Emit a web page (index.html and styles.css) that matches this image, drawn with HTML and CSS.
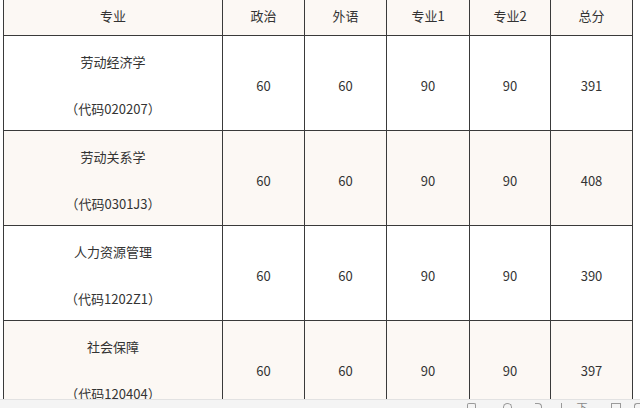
FILE: index.html
```html
<!DOCTYPE html>
<html lang="zh">
<head>
<meta charset="utf-8">
<link rel="stylesheet" href="styles.css">
</head>
<body>
<div class="page">
  <div class="table-wrap">
    <table class="scores">
      <colgroup>
        <col class="c-major"><col class="c1"><col class="c2"><col class="c3"><col class="c4"><col class="c5">
      </colgroup>
      <thead>
        <tr><th>专业</th><th>政治</th><th>外语</th><th>专业1</th><th>专业2</th><th>总分</th></tr>
      </thead>
      <tbody>
        <tr>
          <td><div class="name">劳动经济学</div><div class="code">（代码020207）</div></td>
          <td>60</td><td>60</td><td>90</td><td>90</td><td>391</td>
        </tr>
        <tr class="alt">
          <td><div class="name">劳动关系学</div><div class="code">（代码0301J3）</div></td>
          <td>60</td><td>60</td><td>90</td><td>90</td><td>408</td>
        </tr>
        <tr>
          <td><div class="name">人力资源管理</div><div class="code">（代码1202Z1）</div></td>
          <td>60</td><td>60</td><td>90</td><td>90</td><td>390</td>
        </tr>
        <tr class="alt">
          <td><div class="name">社会保障</div><div class="code">（代码120404）</div></td>
          <td>60</td><td>60</td><td>90</td><td>90</td><td>397</td>
        </tr>
      </tbody>
    </table>
  </div>
  <div class="toolbar">
    <span class="tb-icon sq"></span>
    <span class="tb-icon heart"></span>
    <span class="tb-icon share"></span>
    <span class="tb-icon dl"></span>
    <span class="tb-text">下载</span>
    <span class="tb-icon sq2"></span>
    <span class="tb-icon more"></span>
  </div>
</div>
</body>
</html>
```
FILE: styles.css
```css
html, body {
  margin: 0;
  padding: 0;
  background: #ffffff;
}
.page {
  width: 640px;
  height: 408px;
  display: flex;
  flex-direction: column;
  overflow: hidden;
  font-family: "Noto Sans CJK SC", "Microsoft YaHei", sans-serif;
  color: #333333;
}
.table-wrap {
  flex: 1;
  overflow: hidden;
  padding-left: 3px;
}
.scores {
  border-collapse: collapse;
  table-layout: fixed;
  width: 630px;
  margin-top: -6px;
  border-left: 1px solid #9a9a9a;
  font-size: 13px;
}
.c-major { width: 219px; }
.c1 { width: 82px; }
.c2 { width: 82px; }
.c3 { width: 83px; }
.c4 { width: 81px; }
.c5 { width: 82px; }
.scores th,
.scores td {
  border: 1px solid #3a3a3a;
  text-align: center;
  vertical-align: middle;
  padding: 0;
}
.scores th {
  height: 40px;
  font-weight: normal;
  background: #fcf8f4;
}
.scores td {
  height: 95px;
  padding-top: 4px;
  box-sizing: border-box;
  background: #ffffff;
}
.scores tr.alt td {
  background: #fcf8f4;
}
.name, .code {
  line-height: 23.5px;
}
.code {
  margin-top: 23.5px;
}
.toolbar {
  height: 8px;
  background: #f4f4f4;
  border-top: 1px solid #e2e2e2;
  display: flex;
  align-items: flex-start;
  padding-left: 467px;
  overflow: hidden;
}
.tb-icon {
  display: block;
  margin-top: 3px;
  border: 1px solid #9a9a9a;
  border-bottom: none;
  box-sizing: border-box;
}
.sq { width: 9px; height: 8px; border-radius: 2px 2px 0 0; margin-right: 27px; }
.heart { width: 10px; height: 8px; border-radius: 5px 5px 0 0; margin-right: 23px; }
.share { width: 7px; height: 8px; border-width: 1px 1px 0 0; border-radius: 0 4px 0 0; margin-right: 19px; }
.dl { width: 1px; height: 8px; border-width: 0 0 0 1px; margin-right: 15px; }
.tb-text {
  font-size: 11px;
  line-height: 11px;
  margin-top: 2px;
  color: #8a8a8a;
  margin-right: 14px;
}
.sq2 { width: 11px; height: 8px; margin-right: 13px; }
.more { width: 6px; height: 8px; border-radius: 3px 0 0 0; border-width: 1px 0 0 1px; }
```
